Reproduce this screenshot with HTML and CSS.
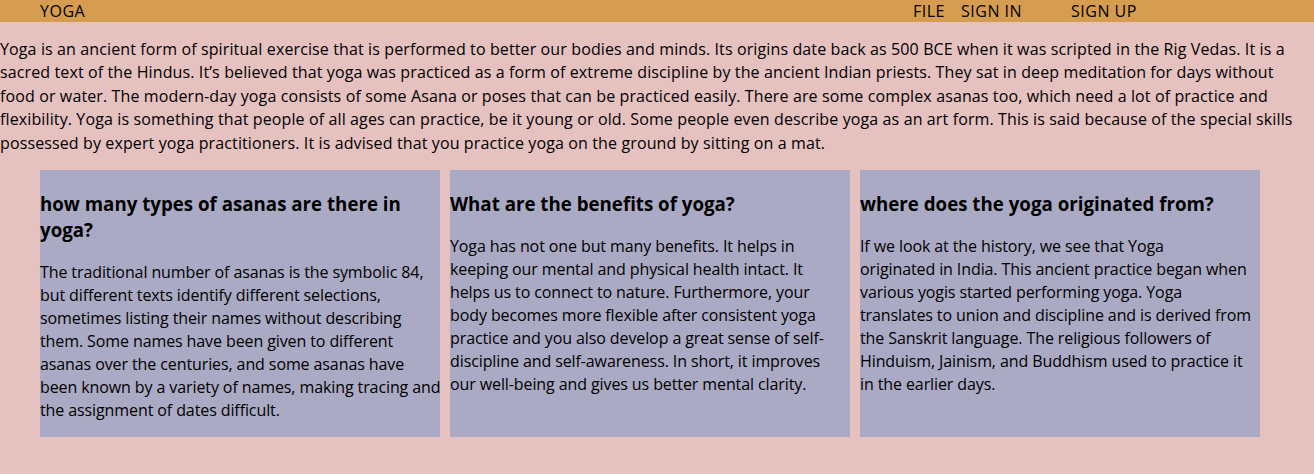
FILE: index.html
```html
<!DOCTYPE html>
<html lang="en">
<head>
<meta charset="utf-8">
<title>Yoga</title>
<link rel="stylesheet" href="styles.css">
</head>
<body>
<header class="topbar">
  <div class="brand">YOGA</div>
  <nav class="nav">
    <a class="nav-file" href="#">FILE</a>
    <a class="nav-signin" href="#">SIGN IN</a>
    <a class="nav-signup" href="#">SIGN UP</a>
  </nav>
</header>
<p class="intro">Yoga is an ancient form of spiritual exercise that is performed to better our bodies and minds. Its origins date back as 500 BCE when it was scripted in the Rig Vedas. It is a<br>sacred text of the Hindus. It’s believed that yoga was practiced as a form of extreme discipline by the ancient Indian priests. They sat in deep meditation for days without<br>food or water. The modern-day yoga consists of some Asana or poses that can be practiced easily. There are some complex asanas too, which need a lot of practice and<br>flexibility. Yoga is something that people of all ages can practice, be it young or old. Some people even describe yoga as an art form. This is said because of the special skills<br>possessed by expert yoga practitioners. It is advised that you practice yoga on the ground by sitting on a mat.</p>
<section class="cards">
  <article class="card">
    <h3 class="card-title">how many types of asanas are there in<br>yoga?</h3>
    <p class="card-text">The traditional number of asanas is the symbolic 84,<br>but different texts identify different selections,<br>sometimes listing their names without describing<br>them. Some names have been given to different<br>asanas over the centuries, and some asanas have<br>been known by a variety of names, making tracing and<br>the assignment of dates difficult.</p>
  </article>
  <article class="card">
    <h3 class="card-title">What are the benefits of yoga?</h3>
    <p class="card-text">Yoga has not one but many benefits. It helps in<br>keeping our mental and physical health intact. It<br>helps us to connect to nature. Furthermore, your<br>body becomes more flexible after consistent yoga<br>practice and you also develop a great sense of self-<br>discipline and self-awareness. In short, it improves<br>our well-being and gives us better mental clarity.</p>
  </article>
  <article class="card">
    <h3 class="card-title">where does the yoga originated from?</h3>
    <p class="card-text">If we look at the history, we see that Yoga<br>originated in India. This ancient practice began when<br>various yogis started performing yoga. Yoga<br>translates to union and discipline and is derived from<br>the Sanskrit language. The religious followers of<br>Hinduism, Jainism, and Buddhism used to practice it<br>in the earlier days.</p>
  </article>
</section>
</body>
</html>
```
FILE: styles.css
```css
html, body {
  margin: 0;
  padding: 0;
}
body {
  background: #e5c1c0;
  color: #000;
  font-family: "Open Sans", "Liberation Sans", sans-serif;
  font-size: 16px;
  letter-spacing: 0.12px;
  height: 474px;
  overflow: hidden;
}
.topbar {
  display: flex;
  align-items: center;
  height: 22px;
  background: #d69c4f;
  padding-left: 40px;
  line-height: 22px;
  letter-spacing: 0.5px;
}
.brand {
  width: 873px;
}
.nav {
  display: flex;
}
.nav a {
  color: #000;
  text-decoration: none;
}
.nav-file { width: 48px; }
.nav-signin { width: 110px; }
.intro {
  margin: 16px 0 15px;
  line-height: 23.4px;
  white-space: nowrap;
}
.cards {
  display: flex;
  gap: 10px;
  padding-left: 40px;
}
.card {
  width: 400px;
  background: #abaac4;
}
.card-title {
  font-size: 18.72px;
  line-height: 26px;
  font-weight: 700;
  letter-spacing: 0;
  margin: 18.72px 0;
  padding-top: 2px;
}
.card-text {
  margin: 14px 0 15px;
  line-height: 23px;
  letter-spacing: -0.1px;
  white-space: nowrap;
}
```
